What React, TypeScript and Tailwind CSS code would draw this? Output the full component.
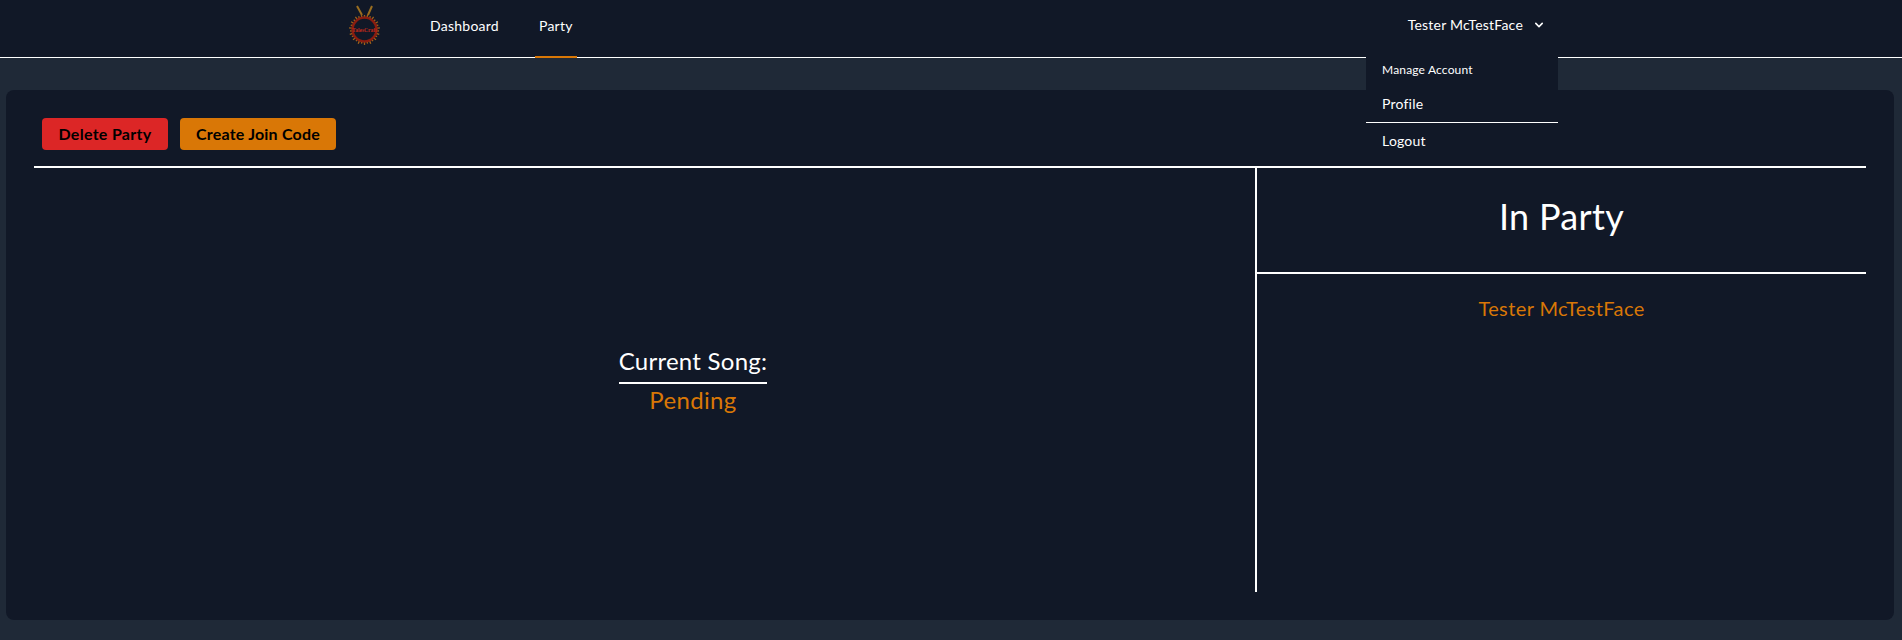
import React from "react";

function Logo() {
  const spikes = Array.from({ length: 30 }, (_, i) => (i * 360) / 30);
  return (
    <svg width="43" height="46" viewBox="0 0 43 46" className="block">
      <path d="M14 2 L19 11 M29 2 L25 11" stroke="#9a6e20" strokeWidth="2" fill="none" />
      <circle cx="21.5" cy="25.5" r="12" fill="none" stroke="#8a1c10" strokeWidth="2.5" />
      {spikes.map((a, i) => (
        <line key={a} x1="21.5" y1={i % 2 ? 10 : 11} x2="21.5" y2="12.5" stroke="#a0621a" strokeWidth="1.3" transform={`rotate(${a} 21.5 25.5)`} />
      ))}
      <text x="21.5" y="27.5" textAnchor="middle" fontSize="5.5" fontWeight="700" fill="#c22a1a" fontFamily="Liberation Serif, serif">TalesCraft</text>
    </svg>
  );
}

function Chevron() {
  return (
    <svg viewBox="0 0 20 20" fill="currentColor" className="ml-2 h-4 w-4">
      <path fillRule="evenodd" clipRule="evenodd" d="M5.293 7.293a1 1 0 011.414 0L10 10.586l3.293-3.293a1 1 0 111.414 1.414l-4 4a1 1 0 01-1.414 0l-4-4a1 1 0 010-1.414z" />
    </svg>
  );
}

export default function App() {
  return (
    <div className="h-[640px] overflow-hidden bg-[#1f2937] text-white font-['Lato','Noto_Sans',sans-serif]">
      <nav className="h-[58px] border-b border-white bg-[#111827]">
        <div className="mx-auto flex h-[57px] max-w-7xl justify-between px-8">
          <div className="flex">
            <div className="flex items-center pb-[3px]"><Logo /></div>
            <div className="ml-10 flex gap-8">
              <a className="flex items-center border-b-2 border-transparent px-1 pb-[4px] text-sm tracking-[0.25px]">Dashboard</a>
              <a className="flex h-[58px] items-center border-b-2 border-[#d97706] px-1 pb-[5px] text-sm tracking-[0.25px]">Party</a>
            </div>
          </div>
          <div className="relative flex items-center pb-[8px]">
            <button className="flex items-center px-3 text-sm tracking-[0.22px]">
              Tester McTestFace
              <Chevron />
            </button>
            <div className="absolute right-[1px] top-[50px] z-10 w-[192px] bg-[#111827] pb-1 pt-1">
              <div className="px-4 py-2 text-xs tracking-[0.17px]">Manage Account</div>
              <div className="px-4 py-2 text-sm tracking-[0.2px]">Profile</div>
              <div className="border-t border-white" />
              <div className="px-4 py-2 text-sm tracking-[0.2px]">Logout</div>
            </div>
          </div>
        </div>
      </nav>
      <main className="pl-[6px] pr-2 pt-8">
        <div className="flex h-[530px] flex-col rounded-lg bg-[#111827] px-[28px] pb-[28px]">
          <div className="flex h-[78px] items-start gap-3 border-b-2 border-white pl-2 pt-7">
            <button className="h-8 w-[126px] rounded bg-[#dc2626] text-base font-bold tracking-[0.3px] text-black">Delete Party</button>
            <button className="h-8 w-[156px] rounded bg-[#d97706] text-base font-bold tracking-[0.2px] text-black">Create Join Code</button>
          </div>
          <div className="flex min-h-0 flex-1">
            <div className="flex w-[1223px] flex-col items-center justify-center border-r-2 border-white pl-[97px]">
              <div>
                <div className="border-b-2 border-white pb-[5px] text-2xl leading-8 tracking-[0.25px]">Current Song:</div>
                <div className="text-center text-2xl leading-8 tracking-[0.35px] text-[#d97706]">Pending</div>
              </div>
            </div>
            <div className="flex-1">
              <div className="flex h-[106px] items-center justify-center border-b-2 border-white pb-[8px] text-4xl tracking-[0.3px]">In Party</div>
              <div className="pt-[18px] text-center text-xl leading-8 tracking-[0.4px] text-[#d97706]">Tester McTestFace</div>
            </div>
          </div>
        </div>
      </main>
    </div>
  );
}
